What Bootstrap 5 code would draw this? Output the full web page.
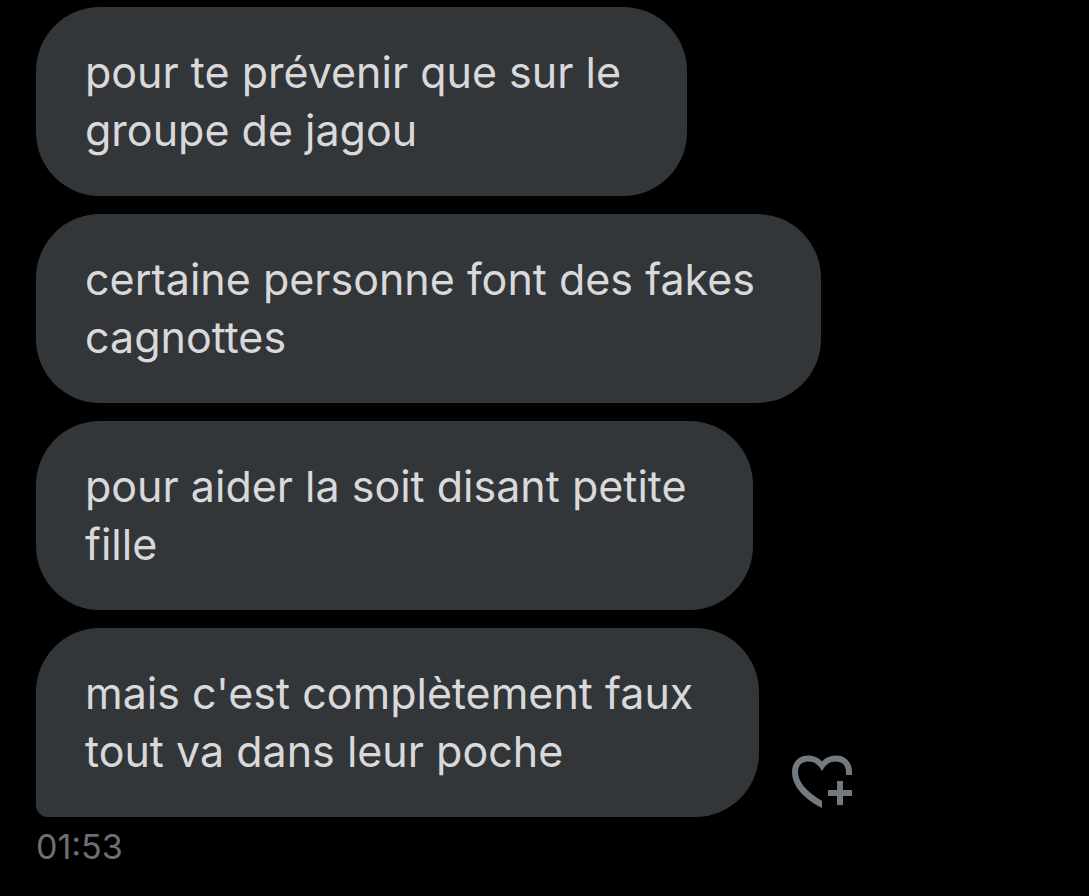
<!DOCTYPE html>
<html lang="fr">
<head>
<meta charset="utf-8">
<meta name="viewport" content="width=device-width, initial-scale=1">
<title>Messages</title>
<link href="https://cdn.jsdelivr.net/npm/bootstrap@5.3.0/dist/css/bootstrap.min.css" rel="stylesheet">
<style>
body{background:#000;color:#d9d9db;font-family:Inter,"Liberation Sans",sans-serif}
.thread{padding:7px 36px 24px;gap:18px}
.bubble{background:#333638;border-radius:64px;padding:36px 66px 37px 49px;font-size:43px;line-height:58px}
.bubble-last{border-bottom-left-radius:12px}
.react{color:#72797f;line-height:0;margin:0 0 9px 33px}
.stamp{color:#6e6f72;font-size:34px;line-height:44px}
</style>
</head>
<body>
<main class="thread d-flex flex-column align-items-start">
<div class="bubble">pour te prévenir que sur le<br>groupe de jagou</div>
<div class="bubble">certaine personne font des fakes<br>cagnottes</div>
<div class="bubble">pour aider la soit disant petite<br>fille</div>
<div>
<div class="d-flex align-items-end">
<div class="bubble bubble-last">mais c'est complètement faux<br>tout va dans leur poche</div>
<button type="button" class="react btn p-0 border-0" aria-label="Ajouter une réaction">
<svg width="60" height="53" viewBox="0 0 60 53" fill="currentColor" aria-hidden="true">
<path d="M60 20V17C60 7 53 .5 44.500 .5C38 .5 33 3 30 6.500C27 3 22 .5 16 .5C7 .5 0 7 0 17C0 31 12 44 30 53V46C15 37 6 27 6 17C6 10.500 10 6.500 16 6.500C22 6.500 26 9 30 16C34 9 38 6.500 44 6.500C50 6.500 54 10.500 54 17V20Z"/>
<path d="M45 26h6v9h9v6h-9v9h-6v-9h-9v-6h9z"/>
</svg>
</button>
</div>
<time class="stamp d-block mt-2">01:53</time>
</div>
</main>
<script src="https://cdn.jsdelivr.net/npm/bootstrap@5.3.0/dist/js/bootstrap.bundle.min.js"></script>
</body>
</html>
